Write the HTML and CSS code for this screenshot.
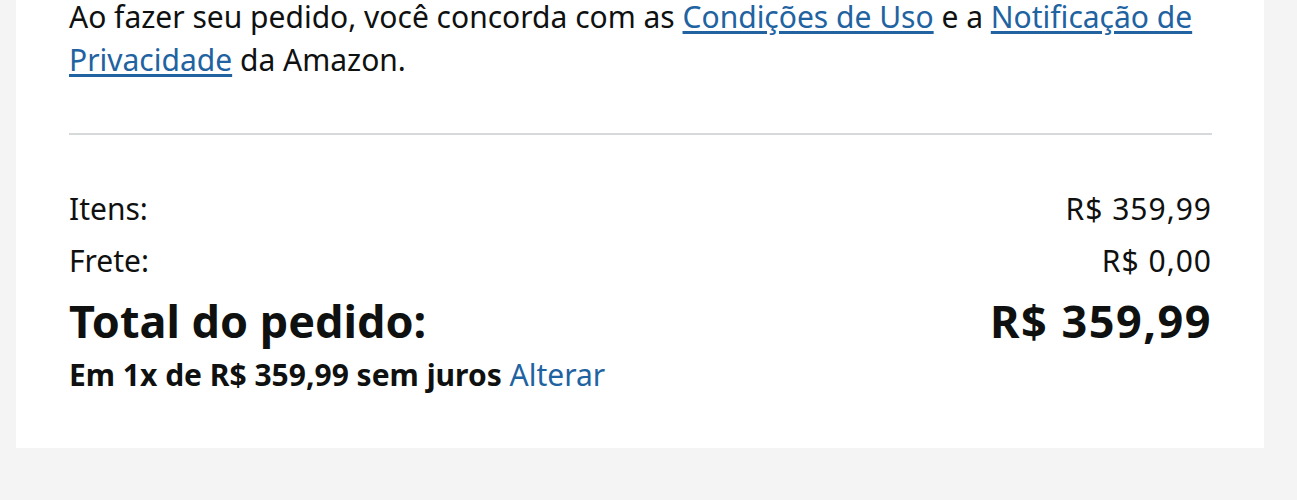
FILE: index.html
```html
<!DOCTYPE html>
<html lang="pt-BR">
<head>
<meta charset="UTF-8">
<title>Resumo do pedido</title>
<link rel="stylesheet" href="styles.css">
</head>
<body>
<div class="card">
    <p class="terms">Ao fazer seu pedido, você concorda com as <a href="#">Condições de Uso</a> e a <a href="#">Notificação de Privacidade</a> da Amazon.</p>
    <hr class="divider">
    <div class="summary">
        <div class="row">
            <span>Itens:</span>
            <span class="amount">R$ 359,99</span>
        </div>
        <div class="row">
            <span>Frete:</span>
            <span class="amount">R$ 0,00</span>
        </div>
        <div class="row total">
            <span>Total do pedido:</span>
            <span class="amount">R$ 359,99</span>
        </div>
        <div class="installments">Em 1x de R$ 359,99 sem juros <a href="#" class="change">Alterar</a></div>
    </div>
</div>
</body>
</html>
```

FILE: styles.css
```css
body {
    margin: 0;
    background-color: #f4f4f4;
    font-family: "Noto Sans", "Liberation Sans", sans-serif;
    color: #0f1111;
    height: 500px;
}
.card {
    background-color: #fff;
    margin-left: 16px;
    width: 1248px;
    padding: 0 52px 53px 53px;
    box-sizing: border-box;
}
.terms {
    margin: 0;
    margin-top: -5px;
    font-size: 30px;
    line-height: 43px;
}
.terms a {
    color: #2162a1;
    text-decoration: underline;
    text-underline-offset: 3px;
}
.divider {
    border: none;
    border-top: 2px solid #d5d9d9;
    margin: 52px 0 0 0;
}
.summary {
    padding-top: 48px;
}
.row {
    display: flex;
    justify-content: space-between;
    font-size: 30px;
    line-height: 52px;
}
.amount {
    letter-spacing: 1px;
}
.row.total {
    font-size: 45px;
    font-weight: bold;
    line-height: 68px;
}
.row.total .amount {
    letter-spacing: 1.5px;
}
.installments {
    font-size: 30px;
    font-weight: bold;
    line-height: 40px;
}
.change {
    color: #2162a1;
    font-weight: normal;
    text-decoration: none;
}
```
